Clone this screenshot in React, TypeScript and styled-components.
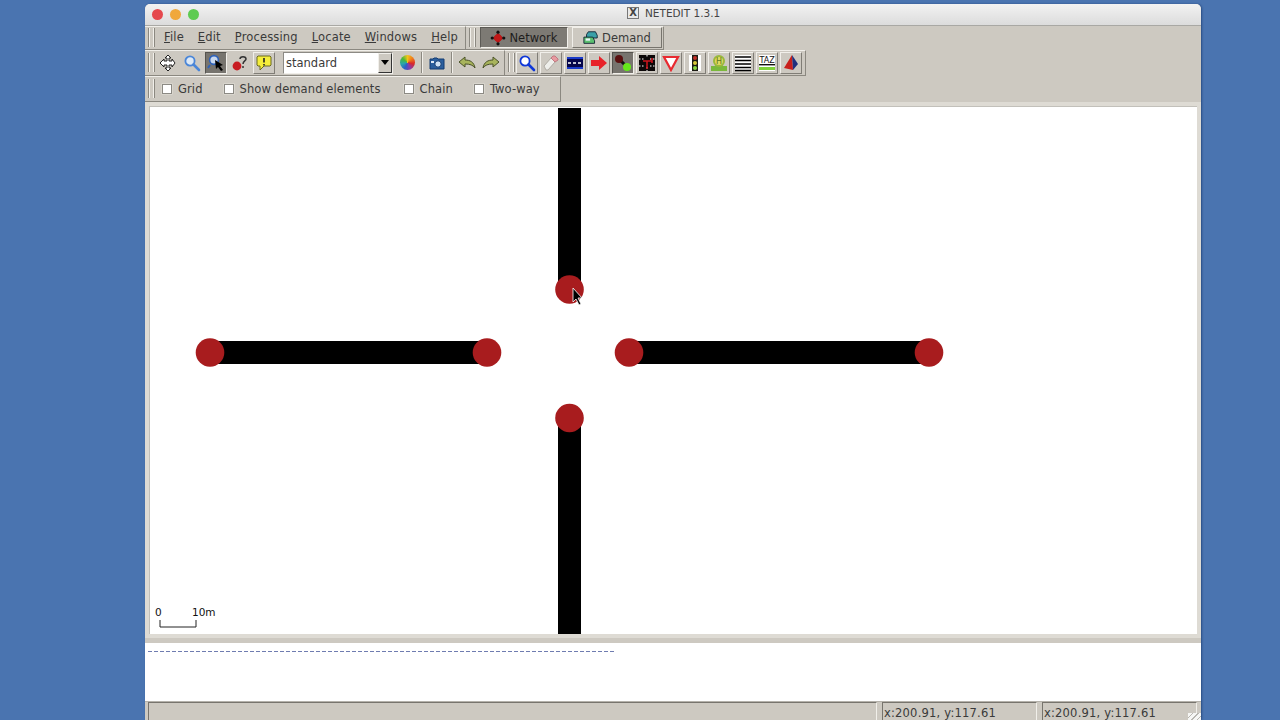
import React from "react";
import styled, { createGlobalStyle } from "styled-components";

const chrome = "#cdc9c1";
const hilite = "#f1efea";
const shade = "#8b8880";

const GlobalStyle = createGlobalStyle`
  html, body { margin: 0; height: 100%; overflow: hidden; background: #4a74b0; }
  body { font-family: "DejaVu Sans", Verdana, sans-serif; font-size: 11.5px; color: #3a3a3a; }
  #root { height: 100%; }
`;

const Desktop = styled.div`
  height: 720px;
  padding: 4px 0 0 145px;
  box-sizing: border-box;
`;
const Window = styled.div`
  width: 1056px;
  height: 716px;
  display: flex;
  flex-direction: column;
  background: ${chrome};
  border-radius: 5px 5px 0 0;
  overflow: hidden;
  box-shadow: 1px 0 2px rgba(20, 50, 100, 0.6);
`;
const TitleBar = styled.div`
  height: 21px;
  flex: none;
  display: flex;
  align-items: center;
  position: relative;
  padding-left: 7px;
  gap: 7px;
  background: linear-gradient(#f2f2f2, #dcdcdc);
  border-bottom: 1px solid #a9a8a4;
`;
const Light = styled.span<{ $color: string }>`
  width: 11px;
  height: 11px;
  border-radius: 50%;
  background: ${(p) => p.$color};
`;
const TitleText = styled.div`
  position: absolute;
  left: 482px;
  top: 3px;
  display: flex;
  align-items: center;
  gap: 6px;
  font-size: 10.5px;
  color: #444;
`;
const XBox = styled.span`
  width: 10px;
  height: 10px;
  border: 1px solid #777;
  background: #e8e8e8;
  font-size: 10px;
  line-height: 10px;
  text-align: center;
  font-weight: bold;
`;

const Row = styled.div<{ $h: number }>`
  height: ${(p) => p.$h}px;
  flex: none;
  display: flex;
  background: ${chrome};
`;
const Dock = styled.div<{ $w: number }>`
  width: ${(p) => p.$w}px;
  flex: none;
  box-sizing: border-box;
  display: flex;
  align-items: center;
  padding-bottom: 1px;
  border-right: 1px solid ${shade};
  border-bottom: 1px solid ${shade};
  border-top: 1px solid ${hilite};
`;
const Grip = styled.span<{ $mr: number }>`
  width: 5px;
  height: 19px;
  flex: none;
  margin: 0 ${(p) => p.$mr}px 0 3px;
  border-left: 1px solid ${shade};
  border-right: 1px solid ${shade};
  box-shadow: inset 1px 0 0 ${hilite}, inset -1px 0 0 ${hilite};
`;
const MenuItem = styled.span`
  padding: 0 7px;
  margin-bottom: 2px;
  line-height: 22px;
  white-space: nowrap;
  letter-spacing: 0.15px;
  u { text-underline-offset: 1px; }
`;
const TabBtn = styled.div<{ $active?: boolean; $w: number }>`
  width: ${(p) => p.$w}px;
  height: 21px;
  flex: none;
  box-sizing: border-box;
  display: flex;
  align-items: center;
  justify-content: center;
  gap: 3px;
  margin-right: 4px;
  background: ${(p) => (p.$active ? "#7d7a74" : chrome)};
  color: ${(p) => (p.$active ? "#1d1d1d" : "#3a3a3a")};
  border: 1px solid;
  border-color: ${(p) =>
    p.$active ? `#5c5a55 ${hilite} ${hilite} #5c5a55` : `${hilite} #77746d #77746d ${hilite}`};
`;
const IconBtn = styled.div<{ $active?: boolean; $raised?: boolean }>`
  width: 22px;
  height: 22px;
  flex: none;
  margin: 0 1px;
  box-sizing: border-box;
  display: flex;
  align-items: center;
  justify-content: center;
  background: ${(p) => (p.$active ? "#77746e" : chrome)};
  border: 1px solid;
  border-color: ${(p) =>
    p.$active
      ? `#55534e ${hilite} ${hilite} #55534e`
      : p.$raised
      ? `${hilite} #807d76 #807d76 ${hilite}`
      : "transparent"};
`;
const Sep = styled.span`
  width: 2px;
  height: 21px;
  flex: none;
  margin: 0 2px;
  background: linear-gradient(90deg, ${shade} 50%, ${hilite} 50%);
`;
const Combo = styled.div`
  width: 110px;
  height: 22px;
  flex: none;
  box-sizing: border-box;
  margin: 0 2px 0 7px;
  display: flex;
  background: #fff;
  border: 1px solid;
  border-color: #8c8a84 ${hilite} ${hilite} #8c8a84;
  padding-left: 2px;
  line-height: 20px;
  justify-content: space-between;
`;
const ComboArrow = styled.span`
  width: 14px;
  height: 20px;
  box-sizing: border-box;
  background: ${chrome};
  border: 1px solid;
  border-color: ${hilite} #333 #333 ${hilite};
  display: flex;
  align-items: center;
  justify-content: center;
  &::after {
    content: "";
    border: 4px solid transparent;
    border-top: 5px solid #000;
    border-bottom: 0;
  }
`;
const Wheel = styled.span`
  width: 15px;
  height: 15px;
  border-radius: 50%;
  background: conic-gradient(#f2c21a, #ef7a1a, #d9262a, #8a3aa8, #2a5fc8, #2aa8a8, #48b838, #f2c21a);
`;
const CheckRow = styled.label<{ $gap: number }>`
  display: flex;
  align-items: center;
  gap: 6px;
  margin-right: ${(p) => p.$gap}px;
  white-space: nowrap;
  letter-spacing: 0.1px;
`;
const CheckBox = styled.span`
  width: 8px;
  height: 8px;
  background: #fff;
  border: 1px solid #8c8a84;
  box-shadow: 0 0 0 0.5px #e6e3dc;
`;

const CanvasFrame = styled.div`
  flex: none;
  height: 541px;
  padding: 4px 4px 0;
  box-sizing: border-box;
  background: linear-gradient(#dedbd4 0 536px, ${chrome} 536px);
`;
const Canvas = styled.div`
  height: 528px;
  background: #fff;
  position: relative;
  overflow: hidden;
  box-shadow: inset 1px 1px 0 #c2c0ba;
`;
const NetSvg = styled.svg`
  display: block;
  width: 1048px;
  height: 528px;
`;
const ScaleLabel = styled.span<{ $x: number }>`
  position: absolute;
  left: ${(p) => p.$x}px;
  top: 500px;
  font-size: 10.5px;
  color: #111;
  line-height: 12px;
`;
const Console = styled.div`
  flex: 1;
  background: #fff;
  padding: 8px 3px 0;
`;
const Dashes = styled.div`
  width: 468px;
  height: 1px;
  background: repeating-linear-gradient(90deg, #6f7cb0 0 4px, transparent 4px 6px);
`;
const StatusBar = styled.div`
  height: 18px;
  flex: none;
  display: flex;
  padding: 0 3px;
  background: ${chrome};
  position: relative;
  border-top: 1px solid #b5b2ab;
`;
const StatusCell = styled.div<{ $w: number; $ml?: number }>`
  width: ${(p) => p.$w}px;
  flex: none;
  margin-left: ${(p) => p.$ml || 0}px;
  box-sizing: border-box;
  border-left: 1px solid #77746d;
  border-top: 1px solid #77746d;
  border-right: 1px solid ${hilite};
  padding-left: 1px;
  line-height: 20px;
  letter-spacing: 0.2px;
  white-space: nowrap;
`;
const Resize = styled.span`
  position: absolute;
  right: 0;
  bottom: 0;
  width: 13px;
  height: 7px;
  background: repeating-linear-gradient(135deg, #f6f6f4 0 3px, #b8b6b0 3px 4px);
`;

const Ico = ({ children, s = 18 }: { children: React.ReactNode; s?: number }) => (
  <svg width={s} height={s} viewBox="0 0 18 18">
    {children}
  </svg>
);

const MoveIcon = () => (
  <Ico>
    <path d="M9 1l3 3h-2v3h3V5l3 4-3 4v-2h-3v3h2l-3 3-3-3h2v-3H5v2L1 9l4-4v2h3V4H6z" fill="#fff" stroke="#222" strokeWidth="1" />
  </Ico>
);
const Lens = ({ color, glass }: { color: string; glass: string }) => (
  <Ico>
    <circle cx="7" cy="7" r="4.6" fill={glass} stroke={color} strokeWidth="1.8" />
    <path d="M10.5 10.5L16 16" stroke={color} strokeWidth="2.6" strokeLinecap="round" />
  </Ico>
);
const SelectIcon = () => (
  <Ico>
    <circle cx="7" cy="6" r="4.4" fill="#c8d8ee" stroke="#2f62b8" strokeWidth="1.6" />
    <path d="M3 11L1 14" stroke="#2f62b8" strokeWidth="2" />
    <path d="M8 6l8 5-3 1 3 4-2 1-3-4-2 2z" fill="#000" />
  </Ico>
);
const QuestionIcon = () => (
  <Ico>
    <circle cx="6" cy="12" r="4.4" fill="#c81c22" />
    <path d="M9 5c0-3 6-3 6 0 0 2-3 2-3 5M12 12v2" fill="none" stroke="#333" strokeWidth="1.5" />
  </Ico>
);
const BubbleIcon = () => (
  <Ico>
    <path d="M3 2h12l1 1v8l-1 1H9l-4 4v-4H3l-1-1V3z" fill="#f5ee3a" stroke="#6a6a20" />
    <path d="M9 4v4.5M9 10v1.4" stroke="#222" strokeWidth="1.6" />
  </Ico>
);
const CameraIcon = () => (
  <Ico>
    <path d="M2 5h3l1-1h3l1 1h6v10H2z" fill="#2b5f9e" stroke="#123a70" />
    <circle cx="10" cy="10" r="3.2" fill="#cfe2f5" stroke="#123a70" />
    <rect x="3" y="7" width="3" height="2" fill="#dfeaf5" />
  </Ico>
);
const Undo = ({ flip }: { flip?: boolean }) => (
  <Ico>
    <g transform={flip ? "matrix(-1 0 0 1 18 0)" : undefined}>
      <path d="M1 8l6-5v3c5 0 9 2 10 8-2-3-5-4-10-4v3z" fill="#a8b45c" stroke="#4a5228" />
    </g>
  </Ico>
);
const EraserIcon = () => (
  <Ico>
    <path d="M2 12l7-8 4 4-7 8H4z" fill="#eeeeea" stroke="#b0aca4" />
    <path d="M9 4l2-2h2l3 3v1l-3 2z" fill="#e89aa0" stroke="#c07880" />
  </Ico>
);
const RoadIcon = () => (
  <Ico>
    <rect x="1" y="3" width="16" height="12" fill="#05054a" />
    <rect x="1" y="3" width="16" height="2" fill="#1a3ac8" />
    <rect x="1" y="13" width="16" height="2" fill="#1a3ac8" />
    <path d="M2 9h14" stroke="#fff" strokeWidth="1.4" strokeDasharray="3 2" />
  </Ico>
);
const ArrowIcon = () => (
  <Ico>
    <path d="M1 6h8V2l8 7-8 7v-4H1z" fill="#e8232a" />
  </Ico>
);
const ConnectIcon = () => (
  <Ico>
    <path d="M6 6l7 7" stroke="#111" strokeWidth="3" />
    <circle cx="5" cy="5" r="4" fill="#5a1010" />
    <circle cx="13" cy="13" r="4" fill="#66e81c" />
  </Ico>
);
const TlsIcon = () => (
  <Ico>
    <rect x="1" y="1" width="16" height="16" fill="#0c0808" />
    <path d="M1 5h5M12 5h5M1 12h5M12 12h5M9 1v3M9 13v4" stroke="#fff" strokeWidth="1" strokeDasharray="1.5 1.5" />
    <path d="M5 7h9M9 7v8M14 4v5" stroke="#c8141c" strokeWidth="1.6" fill="none" />
  </Ico>
);
const YieldIcon = () => (
  <Ico>
    <path d="M2 3h14L9 16z" fill="#fff" stroke="#e82a30" strokeWidth="2.2" />
  </Ico>
);
const LightIcon = () => (
  <Ico>
    <rect x="3" y="1" width="12" height="16" fill="#fff" />
    <rect x="6" y="1" width="6" height="16" fill="#1c1c14" />
    <circle cx="9" cy="4" r="2" fill="#c03028" />
    <circle cx="9" cy="9" r="2" fill="#d8c838" />
    <circle cx="9" cy="14" r="2" fill="#8ad840" />
  </Ico>
);
const BusIcon = () => (
  <Ico>
    <rect x="1" y="12" width="16" height="5" fill="#7ab83c" />
    <circle cx="9" cy="7" r="6" fill="#9ab83c" />
    <circle cx="9" cy="7" r="4" fill="#e0d860" />
    <text x="9" y="10" fontSize="8" fontFamily="'DejaVu Sans', sans-serif" textAnchor="middle" fill="#5a7a20">H</text>
  </Ico>
);
const LinesIcon = () => (
  <Ico>
    <rect x="1" y="1" width="16" height="16" fill="#fff" />
    <path d="M1 3h16M1 6.5h16M1 10h16M1 13.5h16M1 16.5h16" stroke="#000" strokeWidth="1.4" />
  </Ico>
);
const TazIcon = () => (
  <Ico>
    <rect x="1" y="1" width="16" height="16" fill="#fff" />
    <text x="9" y="9" fontSize="8" fontFamily="'DejaVu Sans', sans-serif" textAnchor="middle" fill="#111">TAZ</text>
    <rect x="1" y="10" width="16" height="1.4" fill="#111" />
    <rect x="1" y="13" width="16" height="3" fill="#7fd23a" />
  </Ico>
);
const PolyIcon = () => (
  <Ico>
    <path d="M10 1L2 14l9 2z" fill="#c8201c" />
    <path d="M10 1l6 9-5 6z" fill="#22307e" />
  </Ico>
);
const NetworkIcon = () => (
  <Ico s={16}>
    <path d="M9 3l6 6-6 6-6-6z" fill="#b01818" />
    <circle cx="9" cy="9" r="4" fill="#c01818" />
    <g fill="#111">
      <circle cx="9" cy="2.5" r="1.8" />
      <circle cx="9" cy="15.5" r="1.8" />
      <circle cx="2.5" cy="9" r="1.8" />
      <circle cx="15.5" cy="9" r="1.8" />
    </g>
  </Ico>
);
const DemandIcon = () => (
  <Ico s={16}>
    <path d="M6 2h8l2 4v3H4V5z" fill="#3aa0a8" stroke="#123" />
    <path d="M1 8h10l2 4v3H1z" fill="#5cc070" stroke="#123" />
    <rect x="3" y="9.5" width="5" height="2.5" fill="#e8f4f8" />
  </Ico>
);

const menus: [string, string][] = [
  ["F", "ile"],
  ["E", "dit"],
  ["P", "rocessing"],
  ["L", "ocate"],
  ["W", "indows"],
  ["H", "elp"],
];

const nodes = [
  [420.5, 183.5],
  [61, 246.5],
  [338, 246.5],
  [480, 246.5],
  [780, 246.5],
  [420.5, 312],
];

export default function App() {
  return (
    <Desktop>
      <GlobalStyle />
      <Window>
        <TitleBar>
          <Light $color="#e5484d" />
          <Light $color="#f0a83c" />
          <Light $color="#5ecb52" />
          <TitleText>
            <XBox>X</XBox>
            NETEDIT 1.3.1
          </TitleText>
        </TitleBar>

        <Row $h={24}>
          <Dock $w={321}>
            <Grip $mr={2} />
            {menus.map(([k, rest]) => (
              <MenuItem key={k}>
                <u>{k}</u>
                {rest}
              </MenuItem>
            ))}
          </Dock>
          <Dock $w={198}>
            <Grip $mr={4} />
            <TabBtn $active $w={88}>
              <NetworkIcon />
              Network
            </TabBtn>
            <TabBtn $w={90}>
              <DemandIcon />
              Demand
            </TabBtn>
          </Dock>
        </Row>

        <Row $h={26}>
          <Dock $w={360}>
            <Grip $mr={1} />
            <IconBtn><MoveIcon /></IconBtn>
            <IconBtn><Lens color="#4a86d8" glass="#dce8f5" /></IconBtn>
            <IconBtn $active><SelectIcon /></IconBtn>
            <IconBtn><QuestionIcon /></IconBtn>
            <IconBtn $raised><BubbleIcon /></IconBtn>
            <Combo>
              standard
              <ComboArrow />
            </Combo>
            <IconBtn><Wheel /></IconBtn>
            <Sep />
            <IconBtn><CameraIcon /></IconBtn>
            <Sep />
            <IconBtn><Undo /></IconBtn>
            <IconBtn><Undo flip /></IconBtn>
          </Dock>
          <Dock $w={301}>
            <Grip $mr={0} />
            <IconBtn $raised><Lens color="#1038d8" glass="#fff" /></IconBtn>
            <IconBtn $raised><EraserIcon /></IconBtn>
            <IconBtn $raised><RoadIcon /></IconBtn>
            <IconBtn $raised><ArrowIcon /></IconBtn>
            <IconBtn $active><ConnectIcon /></IconBtn>
            <IconBtn $raised><TlsIcon /></IconBtn>
            <IconBtn $raised><YieldIcon /></IconBtn>
            <IconBtn $raised><LightIcon /></IconBtn>
            <IconBtn $raised><BusIcon /></IconBtn>
            <IconBtn $raised><LinesIcon /></IconBtn>
            <IconBtn $raised><TazIcon /></IconBtn>
            <IconBtn $raised><PolyIcon /></IconBtn>
          </Dock>
        </Row>

        <Row $h={26}>
          <Dock $w={416}>
            <Grip $mr={7} />
            <CheckRow $gap={21}><CheckBox />Grid</CheckRow>
            <CheckRow $gap={23}><CheckBox />Show demand elements</CheckRow>
            <CheckRow $gap={21}><CheckBox />Chain</CheckRow>
            <CheckRow $gap={0}><CheckBox />Two-way</CheckRow>
          </Dock>
        </Row>

        <CanvasFrame>
          <Canvas>
            <NetSvg viewBox="0 0 1048 528">
              <rect x="409" y="2" width="23" height="182" fill="#000" />
              <rect x="409" y="312" width="23" height="216" fill="#000" />
              <rect x="61" y="235" width="277" height="23" fill="#000" />
              <rect x="480" y="235" width="300" height="23" fill="#000" />
              {nodes.map(([cx, cy]) => (
                <circle key={cx + "-" + cy} cx={cx} cy={cy} r="14.3" fill="#a81c1e" />
              ))}
              <path d="M424 182v14l3-3 3 6 2-1-3-6h4z" fill="#000" stroke="#fff" strokeWidth="0.8" />
              <path d="M11 514v7h36v-7" fill="none" stroke="#222" strokeWidth="1" />
            </NetSvg>
            <ScaleLabel $x={6}>0</ScaleLabel>
            <ScaleLabel $x={43}>10m</ScaleLabel>
          </Canvas>
        </CanvasFrame>

        <Console>
          <Dashes />
        </Console>

        <StatusBar>
          <StatusCell $w={729} />
          <StatusCell $w={155} $ml={5}>x:200.91, y:117.61</StatusCell>
          <StatusCell $w={155} $ml={5}>x:200.91, y:117.61</StatusCell>
          <Resize />
        </StatusBar>
      </Window>
    </Desktop>
  );
}
